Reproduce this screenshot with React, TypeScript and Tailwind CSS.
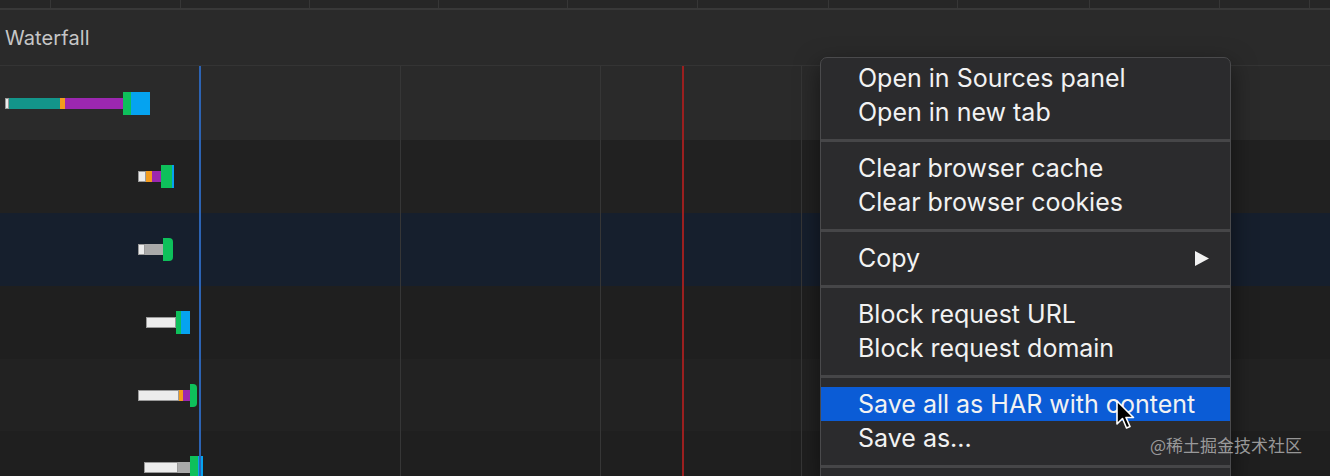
import React from 'react';

type Seg = { w: number; c: string; tall?: boolean; round?: boolean; edge?: boolean };
type Row = { h: number; bg: string; start: number; segs: Seg[] };

const WHITE = '#ececec';
const TEAL = '#13958a';
const ORANGE = '#f39c1e';
const PURPLE = '#9c27b0';
const GREEN = '#0ec05b';
const BLUE = '#05a3f0';
const GRAY = '#a9a9a9';

const rows: Row[] = [
  { h: 74, bg: '#2a2a2a', start: 5, segs: [
    { w: 4, c: WHITE, edge: true }, { w: 51, c: TEAL }, { w: 5, c: ORANGE }, { w: 58, c: PURPLE },
    { w: 8, c: GREEN, tall: true }, { w: 19, c: BLUE, tall: true },
  ] },
  { h: 73, bg: '#212121', start: 138, segs: [
    { w: 8, c: WHITE, edge: true }, { w: 6, c: ORANGE }, { w: 9, c: PURPLE },
    { w: 11, c: GREEN, tall: true }, { w: 2, c: BLUE, tall: true },
  ] },
  { h: 73, bg: '#161f2d', start: 138, segs: [
    { w: 7, c: WHITE, edge: true }, { w: 18, c: GRAY }, { w: 10, c: GREEN, tall: true, round: true },
  ] },
  { h: 73, bg: '#1f1f1f', start: 146, segs: [
    { w: 30, c: WHITE, edge: true }, { w: 5, c: GREEN, tall: true }, { w: 9, c: BLUE, tall: true },
  ] },
  { h: 72, bg: '#222222', start: 138, segs: [
    { w: 41, c: WHITE, edge: true }, { w: 4, c: ORANGE }, { w: 7, c: PURPLE },
    { w: 7, c: GREEN, tall: true, round: true },
  ] },
  { h: 73, bg: '#1f1f1f', start: 144, segs: [
    { w: 34, c: WHITE, edge: true }, { w: 12, c: GRAY }, { w: 8, c: GREEN, tall: true }, { w: 5, c: BLUE, tall: true },
  ] },
];

const topCells = [51, 130, 129, 129, 129, 130, 131, 129, 132, 130, 90];

type Item = { label: string; sub?: boolean; active?: boolean } | 'sep';

const menu: Item[] = [
  { label: 'Open in Sources panel' },
  { label: 'Open in new tab' },
  'sep',
  { label: 'Clear browser cache' },
  { label: 'Clear browser cookies' },
  'sep',
  { label: 'Copy', sub: true },
  'sep',
  { label: 'Block request URL' },
  { label: 'Block request domain' },
  'sep',
  { label: 'Save all as HAR with content', active: true },
  { label: 'Save as...' },
  'sep',
];

const Bar = ({ row }: { row: Row }) => (
  <div className="flex items-center h-full" style={{ paddingLeft: row.start }}>
    {row.segs.map((s, i) => (
      <div
        key={i}
        className={`${s.tall ? 'h-[23px]' : 'h-[11px]'} ${s.round ? 'rounded-r-[4px]' : ''} ${s.edge ? 'border border-[#9a9a9a]' : ''}`}
        style={{ width: s.w, background: s.c }}
      />
    ))}
  </div>
);

// grid lines drawn over the rows, one flex strip of columns
const GridLines = () => (
  <div className="absolute inset-0 flex pointer-events-none">
    <div className="w-[199px] shrink-0" />
    <div className="w-[2px] shrink-0 bg-[#2c63b3]" />
    <div className="w-[200px] shrink-0 border-r border-[#363636]" />
    <div className="w-[200px] shrink-0 border-r border-[#363636]" />
    <div className="w-[81px] shrink-0" />
    <div className="w-[2px] shrink-0 bg-[#9b1f1f]" />
    <div className="w-[118px] shrink-0 border-r border-[#363636]" />
  </div>
);

const Cursor = () => (
  <svg width="22" height="32" viewBox="0 0 22 32" className="absolute left-[1115px] top-[400px]">
    <path d="M2 1 L2 24 L7.5 18.5 L11.5 28 L15 26.5 L11 17.5 L18.5 17.5 Z" fill="#000" stroke="#fff" strokeWidth="1.6" strokeLinejoin="round" />
  </svg>
);

export default function App() {
  return (
    <div className="relative w-[1330px] h-[476px] overflow-hidden bg-[#1f1f1f] font-['Inter','Noto_Sans',sans-serif]">
      {/* column strip of the table above */}
      <div className="flex h-[10px] bg-[#262626] border-b-2 border-[#383838]">
        {topCells.map((w, i) => (
          <div key={i} className="h-full border-r border-[#363636] shrink-0" style={{ width: w }} />
        ))}
      </div>

      <div className="flex items-center h-[56px] bg-[#2a2a2a] border-b border-[#343434] pl-[5px] text-[20px] text-[#c6c6c6] tracking-[0.1px]">
        Waterfall
      </div>

      <div className="relative">
        {rows.map((r, i) => (
          <div key={i} style={{ height: r.h, background: r.bg }}>
            <Bar row={r} />
          </div>
        ))}
        <GridLines />
      </div>

      {/* context menu */}
      <div className="absolute left-[820px] top-[57px] w-[411px] pt-[3px] rounded-t-[7px] bg-[#2b2b2d] border border-[#4a4a4c] shadow-[0_8px_24px_rgba(0,0,0,0.5)] text-[25px] text-[#f2f2f2]">
        {menu.map((m, i) =>
          m === 'sep' ? (
            <div key={i} className="flex items-center h-[22px]">
              <div className="w-full h-[3px] bg-[#464648]" />
            </div>
          ) : (
            <div
              key={i}
              className={`flex items-center justify-between h-[34px] pl-[37px] pr-[20px] ${m.active ? 'bg-[#0b5cd6]' : ''}`}
            >
              <span className="leading-none">{m.label}</span>
              {m.sub && (
                <svg width="16" height="17" viewBox="0 0 16 17">
                  <path d="M1 1 L15 8.5 L1 16 Z" fill="#f2f2f2" />
                </svg>
              )}
            </div>
          )
        )}
      </div>

      <Cursor />

      <div className="absolute left-[1150px] top-[436px] text-[17px] leading-none text-[#b9b9b9]/80 font-['Noto_Sans_CJK_SC',sans-serif]">
        @稀土掘金技术社区
      </div>
    </div>
  );
}
